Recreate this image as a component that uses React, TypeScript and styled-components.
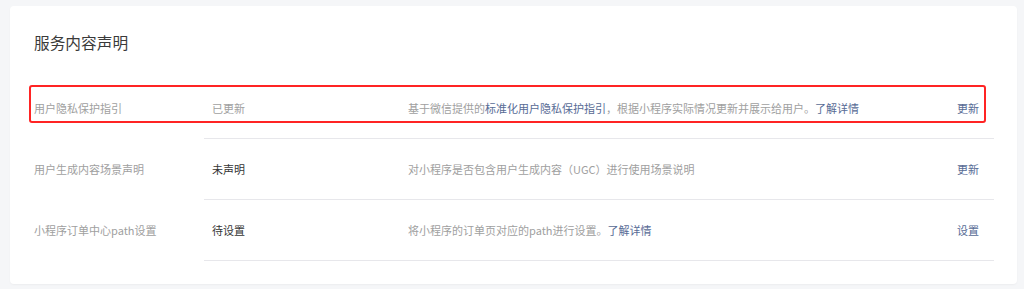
import React from "react";
import styled, { createGlobalStyle } from "styled-components";

const GlobalStyle = createGlobalStyle`
  html, body {
    margin: 0;
    padding: 0;
    background: #f5f6f8;
    font-family: "Noto Sans CJK SC", "Noto Sans", "Liberation Sans", sans-serif;
  }
`;

const Page = styled.div`
  padding: 6px 7px 5px 10px;
  height: 289px;
  box-sizing: border-box;
`;

const Card = styled.section`
  position: relative;
  background: #ffffff;
  border-radius: 4px;
  box-shadow: 0 1px 2px rgba(0, 0, 0, 0.04);
  padding: 26px 23px 23px 24px;
  box-sizing: border-box;
  height: 278px;
`;

const Title = styled.h2`
  margin: 0 0 24px 0;
  font-size: 15.7px;
  line-height: 22px;
  font-weight: 400;
  color: #3a3a3a;
`;

const List = styled.div`
  display: flex;
  flex-direction: column;
`;

const Row = styled.div`
  position: relative;
  display: flex;
  height: 61px;
  font-size: 11px;
`;

const Label = styled.div`
  width: 170px;
  flex: none;
  display: flex;
  align-items: center;
  color: #a0a0a0;
  padding-bottom: 1px;
  box-sizing: border-box;
`;

const Content = styled.div`
  flex: 1;
  display: flex;
  align-items: center;
  border-bottom: 1px solid #e7e7eb;
  padding: 0 15px 0 8px;
`;

const Status = styled.div<{ $muted?: boolean }>`
  width: 196px;
  flex: none;
  color: ${(p) => (p.$muted ? "#a0a0a0" : "#353535")};
`;

const Desc = styled.div`
  flex: 1;
  color: #a0a0a0;
  white-space: nowrap;
`;

const Link = styled.a`
  color: #576b95;
  text-decoration: none;
  cursor: pointer;
`;

const Action = styled.a`
  flex: none;
  color: #576b95;
  text-decoration: none;
  cursor: pointer;
`;

const Highlight = styled.div`
  position: absolute;
  top: 7px;
  left: -5.5px;
  width: 957px;
  height: 38px;
  border: 2px solid #ff2424;
  border-radius: 3px;
  box-sizing: border-box;
  pointer-events: none;
`;

export default function App() {
  return (
    <>
      <GlobalStyle />
      <Page>
        <Card>
          <Title>服务内容声明</Title>
          <List>
            <Row>
              <Label>用户隐私保护指引</Label>
              <Content>
                <Status $muted>已更新</Status>
                <Desc>
                  基于微信提供的<Link>标准化用户隐私保护指引</Link>，根据小程序实际情况更新并展示给用户。
                  <Link>了解详情</Link>
                </Desc>
                <Action>更新</Action>
              </Content>
              <Highlight />
            </Row>
            <Row>
              <Label>用户生成内容场景声明</Label>
              <Content>
                <Status>未声明</Status>
                <Desc>对小程序是否包含用户生成内容（UGC）进行使用场景说明</Desc>
                <Action>更新</Action>
              </Content>
            </Row>
            <Row>
              <Label>小程序订单中心path设置</Label>
              <Content>
                <Status>待设置</Status>
                <Desc>
                  将小程序的订单页对应的path进行设置。<Link>了解详情</Link>
                </Desc>
                <Action>设置</Action>
              </Content>
            </Row>
          </List>
        </Card>
      </Page>
    </>
  );
}
